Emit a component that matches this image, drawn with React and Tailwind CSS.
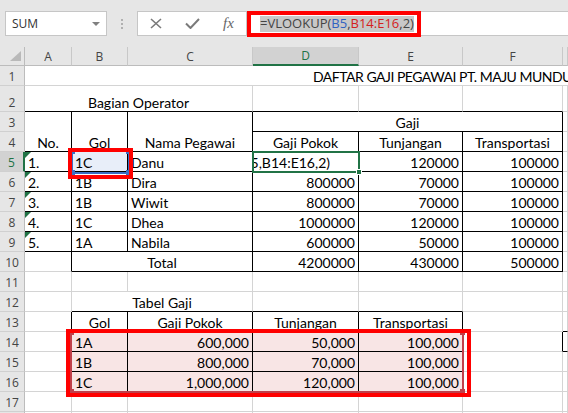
import React from 'react';

// one spreadsheet cell; r / b switch the right / bottom edge from gridline grey to black
function Cell({ children, cls = '', align = 'l', r = false, b = false, tri = false }) {
    const a = align === 'r' ? 'justify-end pr-[3px]' : align === 'c' ? 'justify-center' : 'justify-start pl-[3px]';
    return (
        <div className={`relative flex items-end overflow-hidden whitespace-nowrap border-r border-b ${r ? 'border-r-black' : 'border-r-[#d4d4d4]'} ${b ? 'border-b-black' : 'border-b-[#d4d4d4]'} ${a} ${cls}`}>
            {tri && <span className="absolute top-0 left-0 w-0 h-0 border-t-[6px] border-t-[#217346] border-r-[6px] border-r-transparent" />}
            {children}
        </div>
    );
}

function RowHead({ n, sel = false }) {
    return (
        <div className={`flex items-end justify-center border-b border-b-[#d0d0d0] font-['Open_Sans',sans-serif] text-[12px] leading-[16px] ${sel ? 'bg-[#d2d2d2] text-[#217346] border-r-2 border-r-[#217346]' : 'bg-[#e6e6e6] text-[#444] border-r border-r-[#bcbcbc]'}`}>
            {n}
        </div>
    );
}

function ColHead({ l, sel = false }) {
    return (
        <div className={`flex items-center justify-center border-r border-r-[#c8c8c8] font-['Open_Sans',sans-serif] text-[12px] ${sel ? 'bg-[#d2d2d2] text-[#217346] border-b-2 border-b-[#217346]' : 'bg-[#e6e6e6] text-[#444] border-b border-b-[#bcbcbc]'}`}>
            {l}
        </div>
    );
}

const staff = [
    ['1.', '1C', 'Danu', null, '120000', '100000'],
    ['2.', '1B', 'Dira', '800000', '70000', '100000'],
    ['3.', '1B', 'Wiwit', '800000', '70000', '100000'],
    ['4.', '1C', 'Dhea', '1000000', '120000', '100000'],
    ['5.', '1A', 'Nabila', '600000', '50000', '100000'],
];

const tabel = [
    ['1A', '600,000', '50,000', '100,000'],
    ['1B', '800,000', '70,000', '100,000'],
    ['1C', '1,000,000', '120,000', '100,000'],
];

export default function App() {
    return (
        <div className="relative w-[568px] h-[413px] overflow-hidden bg-white">
            {/* formula bar */}
            <div className="h-[47px] bg-[#e6e6e6] flex items-start pt-[11px] pl-[5px]">
                <div className="w-[102px] h-[25px] bg-white border border-[#c6c6c6] flex items-center justify-between pl-[6px] pr-[6px]">
                    <span className="font-['Open_Sans',sans-serif] text-[12px] text-[#333]">SUM</span>
                    <span className="w-0 h-0 border-l-[4px] border-r-[4px] border-t-[4px] border-l-transparent border-r-transparent border-t-[#808080]" />
                </div>
                <div className="w-[30px] h-[25px] flex flex-col items-center justify-center gap-[2px]">
                    <span className="w-[2px] h-[2px] bg-[#b0b0b0]" />
                    <span className="w-[2px] h-[2px] bg-[#b0b0b0]" />
                    <span className="w-[2px] h-[2px] bg-[#b0b0b0]" />
                </div>
                <div className="w-[110px] h-[25px] bg-white border border-[#c6c6c6] flex items-center pl-[12px] gap-[23px]">
                    <svg width="12" height="11" viewBox="0 0 12 11">
                        <path d="M1 1 L11 10 M11 1 L1 10" stroke="#7a7a7a" strokeWidth="1.6" fill="none" />
                    </svg>
                    <svg width="15" height="11" viewBox="0 0 15 11">
                        <path d="M1 5.5 L5.5 10 L14 1" stroke="#7a7a7a" strokeWidth="2" fill="none" />
                    </svg>
                    <span className="font-['Liberation_Serif',serif] italic text-[15px] text-[#666] leading-none">fx</span>
                </div>
                <div className="flex-1 h-[25px] bg-white border-y border-[#c6c6c6] flex items-center pl-[13px]">
                    <span className="bg-[#c8c8c8] h-[16px] flex items-center font-['Open_Sans',sans-serif] text-[13px] text-[#444] whitespace-nowrap">
                        =VLOOKUP(<span className="text-[#2f62c2]">B5</span>,<span className="text-[#d42020]">B14:E16</span>,2)
                    </span>
                </div>
            </div>

            {/* sheet */}
            <div className="grid grid-cols-[25px_47px_56px_125px_106px_104px_100px_1fr] grid-rows-[19px_20px_26px_repeat(16,20px)] font-['Lato',sans-serif] text-[14px] leading-[17px] text-black">
                <div className="relative bg-[#e6e6e6] border-r border-r-[#bcbcbc] border-b border-b-[#bcbcbc]">
                    <span className="absolute right-[3px] bottom-[4px] w-0 h-0 border-b-[10px] border-b-[#b9b9b9] border-l-[11px] border-l-transparent" />
                </div>
                <ColHead l="A" />
                <ColHead l="B" />
                <ColHead l="C" />
                <ColHead l="D" sel />
                <ColHead l="E" />
                <ColHead l="F" />
                <ColHead l="" />

                {/* row 1 */}
                <RowHead n="1" />
                <Cell cls="col-span-7 !border-r-0" align="l">
                    <span className="pl-[285px] tracking-[-0.5px]">DAFTAR GAJI PEGAWAI PT. MAJU MUNDUR</span>
                </Cell>

                {/* row 2 */}
                <RowHead n="2" />
                <Cell cls="col-span-3" align="c" b>Bagian Operator</Cell>
                <Cell b />
                <Cell b />
                <Cell b />
                <Cell />

                {/* rows 3-4 */}
                <RowHead n="3" />
                <Cell cls="row-span-2" align="c" r b>No.</Cell>
                <Cell cls="row-span-2" align="c" r b>Gol</Cell>
                <Cell cls="row-span-2" align="c" r b>Nama Pegawai</Cell>
                <Cell cls="col-span-3" align="c" r b>Gaji</Cell>
                <Cell />
                <RowHead n="4" />
                <Cell align="c" r b>Gaji Pokok</Cell>
                <Cell align="c" r b>Tunjangan</Cell>
                <Cell align="c" r b>Transportasi</Cell>
                <Cell />

                {/* rows 5-9 */}
                {staff.map((s, i) => (
                    <React.Fragment key={s[0]}>
                        <RowHead n={String(i + 5)} sel={i === 0} />
                        <Cell r b tri>{s[0]}</Cell>
                        <Cell cls={i === 0 ? 'bg-[#e8eef9]' : ''} r b>{s[1]}</Cell>
                        <Cell r b>{s[2]}</Cell>
                        {s[3] === null ? (
                            <Cell align="r" r b cls="pr-[28px]">
                                <span>=VLOOKUP(B5,B14:E16,2)</span>
                            </Cell>
                        ) : (
                            <Cell align="r" r b>{s[3]}</Cell>
                        )}
                        <Cell align="r" r b>{s[4]}</Cell>
                        <Cell align="r" r b>{s[5]}</Cell>
                        <Cell />
                    </React.Fragment>
                ))}

                {/* row 10 */}
                <RowHead n="10" />
                <Cell r />
                <Cell cls="col-span-2" align="c" r b>Total</Cell>
                <Cell align="r" r b>4200000</Cell>
                <Cell align="r" r b>430000</Cell>
                <Cell align="r" r b>500000</Cell>
                <Cell />

                {/* row 11 */}
                <RowHead n="11" />
                <Cell /><Cell /><Cell /><Cell /><Cell /><Cell /><Cell />

                {/* row 12 */}
                <RowHead n="12" />
                <Cell />
                <Cell cls="col-span-2" align="c" b>Tabel Gaji</Cell>
                <Cell b />
                <Cell b />
                <Cell />
                <Cell />

                {/* row 13 */}
                <RowHead n="13" />
                <Cell r />
                <Cell align="c" r b>Gol</Cell>
                <Cell align="c" r b>Gaji Pokok</Cell>
                <Cell align="c" r b>Tunjangan</Cell>
                <Cell align="c" r b>Transportasi</Cell>
                <Cell />
                <Cell b />

                {/* rows 14-16 */}
                {tabel.map((t, i) => (
                    <React.Fragment key={t[0]}>
                        <RowHead n={String(i + 14)} />
                        <Cell r />
                        <Cell cls="bg-[#f8e5e5]" r b>{t[0]}</Cell>
                        <Cell cls="bg-[#f8e5e5]" align="r" r b>{t[1]}</Cell>
                        <Cell cls="bg-[#f8e5e5]" align="r" r b>{t[2]}</Cell>
                        <Cell cls="bg-[#f8e5e5]" align="r" r b>{t[3]}</Cell>
                        <Cell r={i === 0} />
                        <Cell b={i === 0} />
                    </React.Fragment>
                ))}

                {/* row 17 and the sliver of 18 */}
                <RowHead n="17" />
                <Cell /><Cell /><Cell /><Cell /><Cell /><Cell /><Cell />
                <RowHead n="" />
                <Cell /><Cell /><Cell /><Cell /><Cell /><Cell /><Cell />
            </div>

            {/* formula bar callout */}
            <div className="absolute left-[247px] top-[11px] w-[174px] h-[26px] border-4 border-[#ff0000]" />

            {/* B5 reference highlight + callout */}
            <div className="absolute left-[71px] top-[150px] w-[59px] h-[24px] border-2 border-[#3b6fc5]">
                <span className="absolute -left-[3px] -top-[3px] w-[5px] h-[5px] bg-[#3b6fc5]" />
                <span className="absolute -right-[3px] -top-[3px] w-[5px] h-[5px] bg-[#3b6fc5]" />
                <span className="absolute -left-[3px] -bottom-[3px] w-[5px] h-[5px] bg-[#3b6fc5]" />
                <span className="absolute -right-[3px] -bottom-[3px] w-[5px] h-[5px] bg-[#3b6fc5]" />
            </div>
            <div className="absolute left-[68px] top-[148px] w-[65px] h-[31px] border-4 border-[#ff0000]" />

            {/* active cell D5 */}
            <div className="absolute left-[252px] top-[151px] w-[108px] h-[22px] border-2 border-[#217346]" />
            <div className="absolute left-[356px] top-[169px] w-[6px] h-[6px] bg-[#217346] border border-white" />

            {/* B14:E16 reference highlight + callout */}
            <div className="absolute left-[70px] top-[331px] w-[394px] h-[62px] border-2 border-[#c0404a]">
                <span className="absolute -left-[3px] -top-[3px] w-[5px] h-[5px] bg-[#c0404a]" />
                <span className="absolute -right-[3px] -top-[3px] w-[5px] h-[5px] bg-[#c0404a]" />
                <span className="absolute -left-[3px] -bottom-[3px] w-[5px] h-[5px] bg-[#c0404a]" />
                <span className="absolute -right-[3px] -bottom-[3px] w-[5px] h-[5px] bg-[#c0404a]" />
            </div>
            <div className="absolute left-[66px] top-[329px] w-[405px] h-[68px] border-4 border-[#ff0000]" />
        </div>
    );
}
